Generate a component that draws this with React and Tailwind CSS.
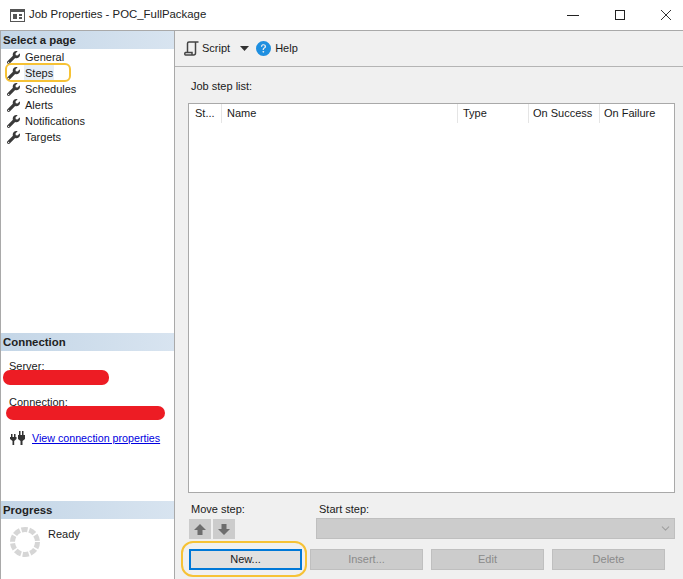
import React from "react";
import { FaWrench } from "react-icons/fa";
import { BsQuestionCircleFill } from "react-icons/bs";
import { ChevronDown } from "lucide-react";

const pages = ["General", "Steps", "Schedules", "Alerts", "Notifications", "Targets"];

const SectionHeader = ({ title }) => (
  <div className="h-[18px] pl-[2px] pt-[1px] flex items-center bg-gradient-to-r from-[#c4d6e7] to-[#d8e4f0] text-[11.4px] font-bold leading-none text-[#222]">
    {title}
  </div>
);

const ScriptIcon = () => (
  <svg width="15" height="15" viewBox="0 0 15 15" fill="none" stroke="#444" strokeWidth="1.5">
    <path d="M3.5 11V2.5C3.5 1.5 4.2 1 5 1H14.5" />
    <path d="M11.5 1V12C11.5 13 11 14 9.5 14H1.5C.6 14 .4 12 1.5 11.5H8V14" />
  </svg>
);

const PlugIcon = () => (
  <svg width="15" height="14" viewBox="0 0 15 14" fill="#333">
    <rect x="1" y="3" width="1.5" height="3" />
    <rect x="4" y="3" width="1.5" height="3" />
    <path d="M0 6H6.5V8L4.2 10V14H2.5V10L0 8Z" />
    <rect x="9" y="0" width="1.5" height="4" />
    <rect x="12" y="0" width="1.5" height="4" />
    <path d="M8 4H15V8L12.5 10V14H10.5V10L8 8Z" />
  </svg>
);

const Spinner = () => (
  <svg width="30" height="30" viewBox="0 0 30 30" fill="none" stroke="#d6d6d6" strokeWidth="5">
    <circle cx="15" cy="15" r="12.5" strokeDasharray="6.2 1.65" />
  </svg>
);

const Arrow = ({ down }) => (
  <svg width="12" height="11" viewBox="0 0 12 11" fill="#6d6d6d" className={down ? "rotate-180" : ""}>
    <path d="M6 0L12 6H8.5V11H3.5V6H0Z" />
  </svg>
);

const DisabledButton = ({ label }) => (
  <div className="w-[113px] h-[21px] flex items-center justify-center bg-[#cccccc] border border-[#bfbfbf] text-[#8a8a8a]">
    {label}
  </div>
);

const App = () => {
  return (
    <div className="relative w-[683px] h-[579px] bg-white overflow-hidden font-['Liberation_Sans',sans-serif] text-[11px] text-[#1a1a1a]">
      {/* title bar */}
      <div className="h-[30px] flex items-center">
        <svg width="15" height="13" viewBox="0 0 15 13" className="ml-[10px]" fill="none">
          <rect x=".5" y=".5" width="14" height="12" stroke="#555" />
          <rect x=".5" y=".5" width="14" height="2.5" fill="#555" />
          <rect x="3" y="5" width="4" height="5" fill="#555" />
          <rect x="9" y="5" width="3" height="2" fill="#555" />
          <rect x="9" y="8" width="3" height="2" fill="#555" />
        </svg>
        <span className="ml-[4px] text-[11.4px] text-[#222]">Job Properties - POC_FullPackage</span>
        <div className="ml-auto flex items-center">
          <div className="w-[12px] h-[1px] bg-[#222] mr-[36px]"></div>
          <div className="w-[10px] h-[10px] border border-[#222] mr-[35px]"></div>
          <svg width="12" height="12" viewBox="0 0 12 12" stroke="#333" className="mr-[11px]">
            <path d="M1 1L11 11M11 1L1 11" />
          </svg>
        </div>
      </div>

      <div className="h-[549px] flex border-t border-[#a9a9a9]">
        {/* left panel */}
        <div className="w-[175px] shrink-0 flex flex-col border-l border-r border-[#a9a9a9] bg-white">
          <SectionHeader title="Select a page" />
          <div className="flex flex-col">
            {pages.map((page) => (
              <div key={page} className="h-[16px] flex items-center">
                <FaWrench size={13} className="ml-[6px] text-[#3a3a3a]" />
                <span className={page === "Steps" ? "ml-[4px] px-[1px] bg-[#e6eef7]" : "ml-[5px]"}>{page}</span>
              </div>
            ))}
          </div>

          <div className="mt-auto h-[168px] flex flex-col">
            <SectionHeader title="Connection" />
            <div className="pl-[8px] pt-[7px] h-[16px] box-content leading-[16px]">Server:</div>
            <div className="pl-[8px] pt-[20px] h-[16px] box-content leading-[16px]">Connection:</div>
            <div className="mt-[20px] flex items-center pl-[9px]">
              <PlugIcon />
              <a className="ml-[7px] text-[10.7px] text-[#0000e0] underline leading-[16px] whitespace-nowrap">View connection properties</a>
            </div>
          </div>

          <div className="h-[78px] flex flex-col">
            <SectionHeader title="Progress" />
            <div className="flex pl-[9px] pt-[7px]">
              <div className="pt-[1px]">
                <Spinner />
              </div>
              <span className="ml-[8px] leading-[16px]">Ready</span>
            </div>
          </div>
        </div>

        {/* right panel */}
        <div className="flex-1 flex flex-col bg-[#f0f0f0]">
          <div className="h-[36px] flex items-center border-b border-[#b4b4b4] pl-[9px]">
            <ScriptIcon />
            <span className="ml-[3px]">Script</span>
            <svg width="9" height="5" viewBox="0 0 9 5" fill="#333" className="ml-[10px]">
              <path d="M0 0H9L4.5 5Z" />
            </svg>
            <BsQuestionCircleFill size={15} className="ml-[7px] text-[#1e8fe0]" />
            <span className="ml-[4px]">Help</span>
          </div>

          <div className="flex-1 flex flex-col pl-[13px] pr-[8px]">
            <div className="mt-[11px] pl-[3px] h-[16px] leading-[16px]">Job step list:</div>
            <div className="mt-[9px] h-[390px] bg-white border border-[#a9a9a9]">
              <div className="h-[19px] flex items-center">
                <div className="w-[33px] h-full pl-[6px] border-r border-[#e5e5e5] leading-[19px]">St...</div>
                <div className="w-[236px] h-full pl-[5px] border-r border-[#e5e5e5] leading-[19px]">Name</div>
                <div className="w-[71px] h-full pl-[5px] border-r border-[#e5e5e5] leading-[19px]">Type</div>
                <div className="w-[71px] h-full pl-[4px] border-r border-[#e5e5e5] leading-[19px]">On Success</div>
                <div className="pl-[4px] leading-[19px]">On Failure</div>
              </div>
            </div>

            <div className="mt-[8px] flex">
              <div className="w-[128px] shrink-0">
                <div className="pl-[3px] h-[16px] leading-[16px]">Move step:</div>
                <div className="mt-[2px] pl-[1px] flex gap-[2px]">
                  <div className="w-[22px] h-[20px] flex items-center justify-center bg-[#cccccc]">
                    <Arrow />
                  </div>
                  <div className="w-[22px] h-[20px] flex items-center justify-center bg-[#cccccc]">
                    <Arrow down />
                  </div>
                </div>
              </div>
              <div className="flex-1">
                <div className="pl-[3px] h-[16px] leading-[16px]">Start step:</div>
                <div className="mt-[1px] h-[21px] flex items-center justify-end bg-[#cccccc] border border-[#bfbfbf] pr-[2px]">
                  <ChevronDown size={13} className="text-[#a0a0a0]" />
                </div>
              </div>
            </div>

            <div className="mt-[10px] pl-[1px] flex gap-[8px]">
              <div className="w-[113px] h-[21px] flex items-center justify-center bg-[#e1e1e1] border-2 border-[#0078d7]">
                New...
              </div>
              <DisabledButton label="Insert..." />
              <DisabledButton label="Edit" />
              <DisabledButton label="Delete" />
            </div>
          </div>
        </div>
      </div>

      {/* markup drawn over the screenshot */}
      <div className="absolute left-[5px] top-[63px] w-[66px] h-[19px] border-[2.5px] border-[#f6c235] rounded-[6px]"></div>
      <div className="absolute left-[181px] top-[541px] w-[126px] h-[36px] border-[2.5px] border-[#f6c235] rounded-[12px]"></div>
      <div className="absolute left-[3px] top-[370px] w-[106px] h-[15px] bg-[#ed1c24] rounded-[7px]"></div>
      <div className="absolute left-[6px] top-[406px] w-[159px] h-[14px] bg-[#ed1c24] rounded-[7px]"></div>
    </div>
  );
};

export default App;
